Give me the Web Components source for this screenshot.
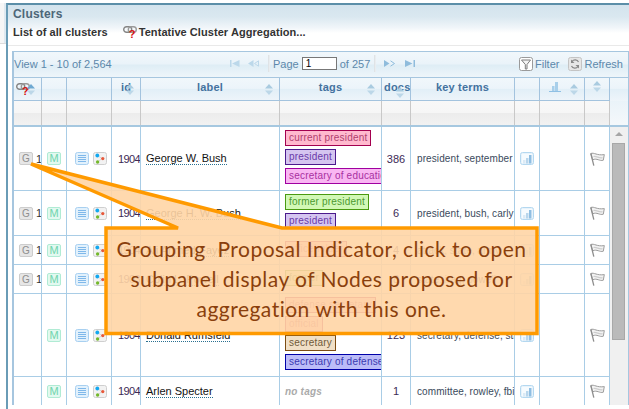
<!DOCTYPE html>
<html><head><meta charset="utf-8"><style>
html,body{margin:0;padding:0;background:#fff;overflow:hidden;width:629px;height:409px}
body{font-family:"Liberation Sans",Arial,sans-serif}
</style></head><body>
<cluster-page>
  <cluster-row group="1" cid="1904" name="George W. Bush" docs="386" terms="president, september">
    <tag-chip tone="pink">current president</tag-chip><tag-chip tone="purple">president</tag-chip><tag-chip tone="magenta">secretary of education</tag-chip>
  </cluster-row>
  <cluster-row group="1" cid="1904" name="George H. W. Bush" docs="6" terms="president, bush, carly">
    <tag-chip tone="green">former president</tag-chip><tag-chip tone="purple">president</tag-chip>
  </cluster-row>
  <cluster-row group="1" cid="1904" name="Ali Ahmed-Fayez" docs="4" terms="attack, state, army">
    <tag-chip tone="pink">officeholder</tag-chip>
  </cluster-row>
  <cluster-row group="1" cid="1903" name="Colin L. Powell" docs="8" terms="state, iraq, powell">
    <tag-chip tone="green">former</tag-chip>
  </cluster-row>
  <cluster-row cid="1904" name="Donald Rumsfeld" docs="123" terms="secretary, defense, staff">
    <tag-chip tone="pink">defense secretary</tag-chip><tag-chip tone="pink">official</tag-chip><tag-chip tone="tan">secretary</tag-chip><tag-chip tone="blue">secretary of defense</tag-chip>
  </cluster-row>
  <cluster-row cid="1904" name="Arlen Specter" docs="1" terms="committee, rowley, fbi" notags="1"></cluster-row>
</cluster-page>
<call-out><span>Grouping&nbsp; Proposal Indicator, click to open</span><span>subpanel display of Nodes proposed for</span><span>aggregation with this one.</span></call-out>
<script>
const COLS='28px 25px 45px 29px 139px 102px 29px 104px 25px 45px 25px';
const ICONS={
 chain:'<svg width="14" height="8" viewBox="0 0 14 8"><rect x=".7" y=".7" width="8" height="5.6" rx="2.8" fill="none" stroke="#858585" stroke-width="1.4"/><rect x="5.3" y=".7" width="8" height="5.6" rx="2.8" fill="none" stroke="#9a9a9a" stroke-width="1.4"/></svg>',
 list:'<svg width="14" height="13" viewBox="0 0 14 13"><rect x=".5" y=".5" width="13" height="12" rx="2" fill="#e2f1fc" stroke="#a8d0f0"/><path d="M3 3.5h8M3 5.5h8M3 7.5h8M3 9.5h8" stroke="#7fb8ea" stroke-width="1"/></svg>',
 dots:'<svg width="14" height="13" viewBox="0 0 14 13"><rect x=".5" y=".5" width="13" height="12" rx="2" fill="#f2f2f2" stroke="#cfcfcf"/><path d="M4.5 3.5 9 6.5 4.5 10" stroke="#d6d6d6" fill="none"/><circle cx="4.3" cy="3.5" r="1.9" fill="#12a8f0"/><circle cx="9.8" cy="6.6" r="1.6" fill="#e8583a"/><circle cx="4.6" cy="10" r="1.7" fill="#74b82c"/></svg>',
 chart:'<svg width="14" height="13" viewBox="0 0 14 13"><rect x=".5" y=".5" width="13" height="12" rx="2" fill="#e8f3fb" stroke="#b4d8f0"/><rect x="2" y="2" width="10" height="9" fill="#f6fbfe"/><rect x="3" y="8" width="2.5" height="3.5" fill="#dbeaf5"/><rect x="6" y="6" width="2.5" height="5.5" fill="#b8d6ec"/><rect x="9" y="3" width="2.5" height="8.5" fill="#8fbee2"/></svg>',
 hchart:'<svg width="12" height="11" viewBox="0 0 12 11"><path d="M3 5h2.5v5H3zM6 1h3v9H6z" fill="#a8cfea"/><path d="M0 10.5h12" stroke="#8fc0e4"/></svg>',
 flag:'<svg width="15" height="14" viewBox="0 0 15 14"><path d="M.8 1.5C4 .2 7 3.8 14.3 2.6L13.3 8.2C9.5 9.4 7 5.8 2.7 7.8Z" fill="#f3f3f3" stroke="#9c9c9c"/><path d="M.8 1.5 3.8 13.6" stroke="#8c8c8c" stroke-width="1.3" fill="none"/><path d="M3.5 4.5C7 3.8 9 6.8 12.5 5.6" stroke="#cdcdcd" stroke-width="1.2" fill="none"/></svg>',
 sort:'<svg width="8" height="11" viewBox="0 0 8 11"><path d="M4 0 8 4.5H0Z" fill="#a9cbe0"/><path d="M4 11 0 6.5H8Z" fill="#bcd7e8"/></svg>',
 sorta:'<svg width="8" height="11" viewBox="0 0 8 11"><path d="M4 0 8 4.5H0Z" fill="#6fa9d2"/><path d="M4 11 0 6.5H8Z" fill="#bcd7e8"/></svg>',
 filter:'<svg width="14" height="14" viewBox="0 0 14 14"><rect x=".5" y=".5" width="13" height="13" rx="2" fill="#fff" stroke="#9a9a9a"/><path d="M2.5 3h9L8 7.5V12H6.3V7.5Z" fill="#f4f4f4" stroke="#7c7c7c"/></svg>',
 refresh:'<svg width="14" height="14" viewBox="0 0 14 14"><rect x=".5" y=".5" width="13" height="13" rx="2" fill="#e6e6e6" stroke="#c4c4c4"/><path d="M10.5 5A3.7 3.7 0 0 0 4 4.5M3.5 9A3.7 3.7 0 0 0 10 9.5" fill="none" stroke="#888" stroke-width="1.2"/><path d="M3 2.5V6H6.5ZM11 11.5V8H7.5Z" fill="#888"/></svg>',
 first:'<svg width="10" height="7" viewBox="0 0 10 7"><path d="M0 0h1.5v7H0zM9.5 0v7L2 3.5Z" fill="#bcd8ea"/></svg>',
 prev:'<svg width="11" height="7" viewBox="0 0 11 7"><path d="M5.5 0v7L0 3.5Z" fill="#bcd8ea"/><path d="M10.5 .8v5.4L6.5 3.5Z" fill="#e4f0f7" stroke="#bcd8ea"/></svg>',
 next:'<svg width="11" height="7" viewBox="0 0 11 7"><path d="M0 0v7l5.5-3.5Z" fill="#8fbcdc"/><path d="M6.5 .8l4 2.7-4 2.7" fill="none" stroke="#8fbcdc"/></svg>',
 last:'<svg width="10" height="7" viewBox="0 0 10 7"><path d="M0 0v7l7.5-3.5ZM8.5 0H10v7H8.5Z" fill="#8fbcdc"/></svg>'
};
class UiIcon extends HTMLElement{
 constructor(){super();this.attachShadow({mode:'open'})}
 connectedCallback(){this.shadowRoot.innerHTML='<style>:host{display:inline-flex;flex:none;line-height:0}</style>'+(ICONS[this.getAttribute('name')]||'')}
}
customElements.define('ui-icon',UiIcon);

class QueryChain extends HTMLElement{
 constructor(){super();this.attachShadow({mode:'open'}).innerHTML=`<style>
 :host{display:inline-block;flex:none;width:14px;height:12px;position:relative}
 ui-icon{position:absolute;left:0;top:0}
 b{position:absolute;left:6px;top:3px;font:bold 11px/10px "Liberation Sans",sans-serif;color:#d81010}
 </style><ui-icon name="chain"></ui-icon><b>?</b>`}
}
customElements.define('query-chain',QueryChain);

const TONES={pink:['#ffb9ce','#a3004f','#b0406e'],purple:['#d5c5f0','#4b1a8c','#6a3aa8'],magenta:['#f9b6f2','#a000a0','#a830a0'],
 green:['#d2f8b6','#4a9a10','#4c9a30'],tan:['#f0dfc6','#7d4c12','#6f5a3a'],blue:['#bcbcf8','#0000a8','#3a3ab0']};
class TagChip extends HTMLElement{
 constructor(){super();this.attachShadow({mode:'open'})}
 connectedCallback(){const t=TONES[this.getAttribute('tone')]||TONES.pink;
  this.shadowRoot.innerHTML=`<style>:host{display:block;flex:none;box-sizing:border-box;height:16px;width:fit-content;margin-bottom:3px;padding:0 3px;
   background:${t[0]};border:1px solid ${t[1]};color:${t[2]};font:10px/14px "Liberation Sans",sans-serif;letter-spacing:.2px;white-space:nowrap}</style><slot></slot>`}
}
customElements.define('tag-chip',TagChip);

class ClusterRow extends HTMLElement{
 constructor(){super();this.attachShadow({mode:'open'})}
 connectedCallback(){
  const a=n=>this.getAttribute(n)||'';
  const g=a('group');
  this.shadowRoot.innerHTML=`<style>
  :host{display:grid;grid-template-columns:${COLS};min-height:29px;background:#fff;box-sizing:border-box;font:11px "Liberation Sans",sans-serif;color:#333}
  .c{box-sizing:border-box;border-right:1px solid #a9cde6;border-bottom:1px solid #a9cde6;display:flex;align-items:center;min-width:0;overflow:hidden}
  .gc{padding-left:5px;gap:3px}
  .btn{box-sizing:border-box;width:14px;height:13px;border-radius:2px;border:1px solid;display:grid;place-items:center;font:10px/11px "Liberation Sans",sans-serif;flex:none}
  .g{background:#e6e6e6;border-color:#cdcdcd;color:#8e8e8e}
  .m{background:#e2f9f0;border-color:#b0ebd4;color:#70d4ac;margin-left:5px;font-size:11px}
  .one{color:#333}
  .ic{padding-left:8px;gap:4px}
  .id{padding-left:6px;letter-spacing:-.6px;color:#3c2a55;white-space:nowrap}
  .nm{padding-left:5px;white-space:nowrap}
  .nm span{border-bottom:1px dotted #2a7090;color:#111}
  .tags{flex-direction:column;align-items:flex-start;justify-content:center;padding:3px 0 3px 5px}
  .none{font:italic bold 10px "Liberation Sans",sans-serif;color:#aaa;letter-spacing:.2px}
  .d{justify-content:center;color:#3c2a55}
  .t{padding-left:6px;white-space:nowrap;font-size:10px;letter-spacing:.1px;word-spacing:-.3px;color:#3a4a5c}
  .ch{padding-left:5px}
  .fl{padding-left:5px}
  </style>
  <div class="c gc">${g?`<span class="btn g">G</span><span class="one">${g}</span>`:''}</div>
  <div class="c"><span class="btn m">M</span></div>
  <div class="c ic"><ui-icon name="list"></ui-icon><ui-icon name="dots"></ui-icon></div>
  <div class="c id">${a('cid')}</div>
  <div class="c nm"><span>${a('name')}</span></div>
  <div class="c tags">${a('notags')?'<span class="none">no tags</span>':'<slot></slot>'}</div>
  <div class="c d">${a('docs')}</div>
  <div class="c t">${a('terms')}</div>
  <div class="c ch"><ui-icon name="chart"></ui-icon></div>
  <div class="c"></div>
  <div class="c fl"><ui-icon name="flag"></ui-icon></div>`;
 }
}
customElements.define('cluster-row',ClusterRow);

class GridToolbar extends HTMLElement{
 constructor(){super();this.attachShadow({mode:'open'}).innerHTML=`<style>
 :host{display:flex;align-items:center;box-sizing:border-box;height:25px;padding:0 5px 2px 0;font:11px "Liberation Sans",sans-serif;color:#5c88ab;white-space:nowrap;
  background:linear-gradient(#f1f7fb 0,#eaf3f9 48%,#deedf5 52%,#eef5fa 100%)}
 .view{width:216px}
 .sep{width:1px;height:17px;background:#dfe3e6;box-shadow:1px 0 #e9edf0}
 .pg{display:flex;align-items:center}
 input{box-sizing:border-box;width:35px;height:13px;margin:0 3px;padding:0 0 0 3px;border:1px solid #777;font:10px/11px "Liberation Sans",sans-serif;color:#000;background:#fff;border-radius:0}
 .sp{flex:1}
 .tool{display:flex;align-items:center;gap:2px}
 </style>
 <span class="view">View 1 - 10 of 2,564</span>
 <ui-icon name="first"></ui-icon><ui-icon name="prev" style="margin:0 9px 0 8px"></ui-icon>
 <span class="sep"></span>
 <span class="pg" style="margin-left:4px">Page<input value="1">of 257</span>
 <span class="sep" style="margin-left:4px"></span>
 <ui-icon name="next" style="margin-left:9px"></ui-icon><ui-icon name="last" style="margin-left:10px"></ui-icon>
 <span class="sp"></span>
 <span class="tool"><ui-icon name="filter"></ui-icon>Filter</span>
 <span class="tool" style="margin-left:9px"><ui-icon name="refresh"></ui-icon>Refresh</span>`}
}
customElements.define('grid-toolbar',GridToolbar);

class ClusterGrid extends HTMLElement{
 constructor(){super();
  const sort='<ui-icon name="sort" class="s"></ui-icon>';
  const th=(inner,cls='')=>`<div class="h ${cls}">${inner}</div>`;
  const blank=Array.from({length:11},()=>'<div class="f"></div>').join('');
  this.attachShadow({mode:'open'}).innerHTML=`<style>
  :host{display:block;box-sizing:border-box;margin:5px 0 0 4px;border:1px solid #a6c6df;border-left-width:2px;border-bottom:0;background:#fff;font-family:"Liberation Sans",sans-serif}
  .head{display:grid;grid-template-columns:${COLS} 1fr;border-top:1px solid #a6c6df;background:linear-gradient(#f1f7fb 0,#ecf4fa 45%,#e2eff7 50%,#eef5fa 100%)}
  .h{box-sizing:border-box;height:23px;border-right:1px solid #a3c3de;border-bottom:1px solid #a3c3de;position:relative;display:flex;align-items:center;justify-content:center;padding-bottom:5px;
     font:bold 11px "Liberation Sans",sans-serif;color:#44729f;letter-spacing:.2px;white-space:nowrap;overflow:hidden}
  .h .s{position:absolute;top:6px;right:6px}
  .h.left{justify-content:flex-start;padding-left:2px}
  .end{border-right:0;border-bottom:0}
  .frow{display:grid;grid-template-columns:${COLS} 1fr;height:24px;background:linear-gradient(#f8f8f8 0,#f6f6f6 48%,#ececec 52%,#f2f2f2 100%)}
  .f{border-right:1px solid #c8c8c8}
  .frow .tail{border:0;background:linear-gradient(#eaf3f9,#f4f8fb)}
  .thick{height:2px;background:#a6c8e0}
  .body{display:flex;height:278px;overflow:hidden}
  .rows{flex:none;width:596px}
  grid-scroll{flex:1}
  </style>
  <grid-toolbar></grid-toolbar>
  <div class="head">
   ${th('<query-chain style="margin-top:4px"></query-chain>'+'<ui-icon name="sorta" class="s"></ui-icon>','left')}
   ${th('')}${th('')}
   ${th('id<ui-icon name="sort" class="s"></ui-icon>')}
   ${th('label'+sort)}
   ${th('tags'+sort)}
   ${th('docs<ui-icon name="sort" class="s" style="top:9px;right:6px"></ui-icon>','left')}
   ${th('key terms')}
   ${th('')}
   ${th('<ui-icon name="hchart" style="margin-right:14px"></ui-icon><ui-icon name="sort" class="s"></ui-icon>')}
   ${th('<ui-icon name="sort"></ui-icon>')}
   <div class="h end"></div>
  </div>
  <div class="frow">${blank}<div class="f tail"></div></div>
  <div class="thick"></div>
  <div class="body"><div class="rows"><slot></slot></div><grid-scroll></grid-scroll></div>`}
}
customElements.define('cluster-grid',ClusterGrid);

class GridScroll extends HTMLElement{
 constructor(){super();this.attachShadow({mode:'open'}).innerHTML=`<style>
 :host{display:flex;flex-direction:column;align-items:center;background:#f0f0f0;box-sizing:border-box;padding:0 2px 0 1px}
 .up{height:14px;display:grid;place-items:center;flex:none}
 .up i{display:block;width:0;height:0;border:4px solid transparent;border-top:0;border-bottom:4px solid #a6a6a6}
 .th{width:13px;height:197px;flex:none;margin-top:2px;box-sizing:border-box;background:#bababa;border:1px solid #a8a8a8}
 </style><div class="up"><i></i></div><div class="th"></div>`}
}
customElements.define('grid-scroll',GridScroll);

class ClusterPage extends HTMLElement{
 constructor(){super();this.attachShadow({mode:'open'}).innerHTML=`<style>
 :host{display:flex;box-sizing:border-box;width:629px;height:409px;padding-top:3px;overflow:hidden;font-family:"Liberation Sans",sans-serif}
 .rail{width:6px;flex:none;height:41px;box-sizing:border-box;background:linear-gradient(90deg,#f6f6f6 60%,#dfe9f0 60%);border-bottom:1px solid #dcdcdc}
 .panel{flex:1;min-width:0;box-sizing:border-box;border-top:2px solid #5b8ea8;border-left:2px solid #6a9cb6;background:#fff}
 .head{box-sizing:border-box;height:41px;border-bottom:1px solid #e9e9e9;padding:2px 0 0 5px;background:linear-gradient(#d3e3ed 0,#dae8f0 30%,#f0f5f9 56%,#fff 70%)}
 h1{margin:0;height:16px;font:bold 12px/15px "Liberation Sans",sans-serif;color:#4d6678;letter-spacing:.2px}
 .tabs{display:flex;align-items:center;height:18px;font:bold 11px "Liberation Sans",sans-serif;color:#333;letter-spacing:.06px}
 .tabs query-chain{margin:0 2px 0 15px}
 </style>
 <div class="rail"></div>
 <div class="panel">
  <div class="head"><h1>Clusters</h1>
   <div class="tabs"><span>List of all clusters</span><query-chain></query-chain><span>Tentative Cluster Aggregation...</span></div>
  </div>
  <cluster-grid><slot></slot></cluster-grid>
 </div>`}
}
customElements.define('cluster-page',ClusterPage);

class CallOut extends HTMLElement{
 constructor(){super();this.attachShadow({mode:'open'}).innerHTML=`<style>
 :host{position:absolute;left:0;top:0;width:629px;height:409px;pointer-events:none}
 svg{position:absolute;left:0;top:0}
 .txt{position:absolute;left:106px;top:228px;width:431px;height:105px;box-sizing:border-box;padding-top:6px;display:flex;flex-direction:column;align-items:center;
   font:21px/30px Lato,"Liberation Sans",sans-serif;letter-spacing:.48px;color:#8a3f0c;white-space:nowrap}
 ::slotted(span){display:block}
 </style>
 <svg width="629" height="409" viewBox="0 0 629 409"><path d="M106 228H178L31 164 282 228H537V333.5H106Z" fill="rgba(255,213,165,.9)" stroke="#ff9a00" stroke-width="3.5"/></svg>
 <div class="txt"><slot></slot></div>`}
}
customElements.define('call-out',CallOut);
</script>
</body></html>
